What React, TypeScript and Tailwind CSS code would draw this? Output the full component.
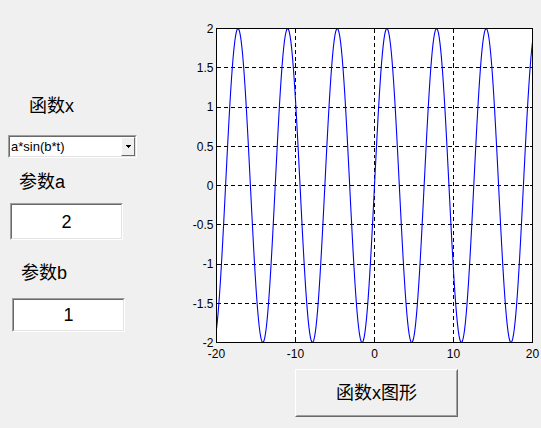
import React from "react";

const X0 = 216.5;
const X1 = 532.5;
const Y0 = 28.5;
const Y1 = 342.5;
const sx = (t: number) => X0 + ((t + 20) / 40) * (X1 - X0);
const sy = (v: number) => Y0 + ((2 - v) / 4) * (Y1 - Y0);
const snap = (p: number) => Math.floor(p) + 0.5;

function Chart() {
  const pts: string[] = [];
  for (let i = 0; i <= 400; i++) {
    const t = -20 + i * 0.1;
    pts.push(`${sx(t).toFixed(2)},${sy(2 * Math.sin(t)).toFixed(2)}`);
  }
  const xTicks = [-20, -10, 0, 10, 20];
  const yTicks = [2, 1.5, 1, 0.5, 0, -0.5, -1, -1.5, -2];
  const font = { fontFamily: '"Liberation Sans", Arial, sans-serif', fontSize: 12 };
  return (
    <svg
      width={351}
      height={350}
      viewBox="190 15 351 350"
      className="shrink-0 mt-[15px]"
    >
      <rect x={X0} y={Y0} width={X1 - X0} height={Y1 - Y0} fill="#ffffff" />
      <defs>
        <clipPath id="ax">
          <rect x={X0} y={Y0} width={X1 - X0} height={Y1 - Y0} />
        </clipPath>
      </defs>
      {/* grid */}
      <g stroke="#000" strokeWidth={1} strokeDasharray="4 3" shapeRendering="crispEdges">
        {xTicks.slice(1, -1).map((t) => (
          <line key={"gx" + t} x1={snap(sx(t))} x2={snap(sx(t))} y1={Y0} y2={Y1} />
        ))}
        {yTicks.slice(1, -1).map((v) => (
          <line key={"gy" + v} x1={X0} x2={X1} y1={snap(sy(v))} y2={snap(sy(v))} />
        ))}
      </g>
      {/* ticks */}
      <g stroke="#000" strokeWidth={1} shapeRendering="crispEdges">
        {xTicks.map((t) => (
          <g key={"tx" + t}>
            <line x1={snap(sx(t))} x2={snap(sx(t))} y1={Y1} y2={Y1 - 3} />
            <line x1={snap(sx(t))} x2={snap(sx(t))} y1={Y0} y2={Y0 + 3} />
          </g>
        ))}
        {yTicks.map((v) => (
          <g key={"ty" + v}>
            <line x1={X0} x2={X0 + 3} y1={snap(sy(v))} y2={snap(sy(v))} />
            <line x1={X1} x2={X1 - 3} y1={snap(sy(v))} y2={snap(sy(v))} />
          </g>
        ))}
      </g>
      <polyline
        points={pts.join(" ")}
        fill="none"
        stroke="#0000ff"
        strokeWidth={1.1}
        clipPath="url(#ax)"
      />
      <rect
        x={X0}
        y={Y0}
        width={X1 - X0}
        height={Y1 - Y0}
        fill="none"
        stroke="#000"
        strokeWidth={1}
        shapeRendering="crispEdges"
      />
      {yTicks.map((v) => (
        <text
          key={"ly" + v}
          x={213.5}
          y={sy(v) + 4.3}
          textAnchor="end"
          fill="#000"
          style={font}
        >
          {String(v)}
        </text>
      ))}
      {xTicks.map((t) => (
        <text
          key={"lx" + t}
          x={sx(t)}
          y={357.5}
          textAnchor="middle"
          fill="#000"
          style={font}
        >
          {String(t)}
        </text>
      ))}
    </svg>
  );
}

const cjk = '"Liberation Sans", "Noto Sans CJK SC", sans-serif';

function Sunken({ className, children }: { className: string; children: React.ReactNode }) {
  return (
    <div
      className={
        "border border-t-[#a0a0a0] border-l-[#a0a0a0] border-b-white border-r-white " + className
      }
    >
      <div className="w-full h-full border border-t-[#696969] border-l-[#696969] border-b-[#e3e3e3] border-r-[#e3e3e3] bg-white flex items-center">
        {children}
      </div>
    </div>
  );
}

export default function App() {
  return (
    <div
      className="w-[541px] h-[428px] bg-[#f0f0f0] overflow-hidden flex flex-col text-black"
      style={{ fontFamily: cjk }}
    >
      <div className="flex items-start h-[365px]">
        <div className="w-[190px] shrink-0 flex flex-col items-start">
          <div className="mt-[96px] ml-[29px] h-[20px] leading-[20px] text-[18px]">函数x</div>
          <Sunken className="mt-[19px] ml-[8px] w-[129px] h-[23px]">
            <span
              className="flex-1 pl-[1px] text-[13px] leading-[16px]"
              style={{ fontFamily: '"Liberation Sans", Arial, sans-serif' }}
            >
              a*sin(b*t)
            </span>
            <div className="w-[14px] h-[19px] mr-[0px] border border-t-white border-l-white border-b-[#696969] border-r-[#696969] bg-[#f0f0f0] flex items-center justify-center">
              <svg width={5} height={3} viewBox="0 0 5 3" shapeRendering="crispEdges">
                <polygon points="0,0 5,0 2.5,3" fill="#000" />
              </svg>
            </div>
          </Sunken>
          <div className="mt-[14px] ml-[19px] h-[20px] leading-[20px] text-[18px]">参数a</div>
          <Sunken className="mt-[11px] ml-[10px] w-[113px] h-[37px]">
            <span
              className="w-full text-center text-[18px] leading-[20px]"
              style={{ fontFamily: '"Liberation Sans", Arial, sans-serif' }}
            >
              2
            </span>
          </Sunken>
          <div className="mt-[23px] ml-[21px] h-[20px] leading-[20px] text-[18px]">参数b</div>
          <Sunken className="mt-[15px] ml-[12px] w-[113px] h-[34px]">
            <span
              className="w-full text-center text-[18px] leading-[20px]"
              style={{ fontFamily: '"Liberation Sans", Arial, sans-serif' }}
            >
              1
            </span>
          </Sunken>
        </div>
        <Chart />
      </div>
      <div className="mt-[4px] ml-[295px] w-[163px] h-[48px] border border-t-white border-l-white border-b-[#696969] border-r-[#696969]">
        <div className="w-full h-full border border-t-[#f0f0f0] border-l-[#f0f0f0] border-b-[#a0a0a0] border-r-[#a0a0a0] bg-[#f0f0f0] flex items-center justify-center text-[18px] leading-[20px]">
          函数x图形
        </div>
      </div>
    </div>
  );
}
